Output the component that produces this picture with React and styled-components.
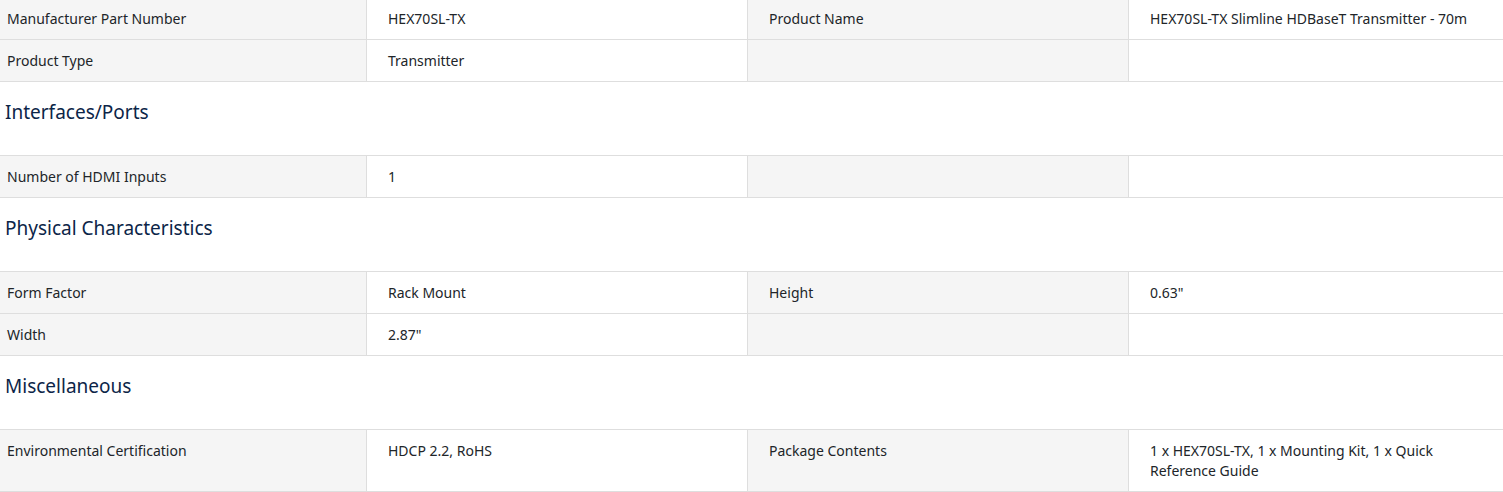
import React from "react";
import styled, { createGlobalStyle } from "styled-components";

const GlobalStyle = createGlobalStyle`
  body {
    margin: 0;
    background: #fff;
    font-family: "Noto Sans", "Open Sans", sans-serif;
    color: #212529;
  }
`;

const Specs = styled.div`
  margin-top: -2px;
  width: 1503px;
`;

const Row = styled.div`
  display: grid;
  grid-template-columns: 366px 381px 381px 375px;
  border-bottom: 1px solid #dedede;
`;

const Cell = styled.div`
  padding: 11px 20px 10px 21px;
  font-size: 14px;
  line-height: 20px;
  min-height: 20px;
  background: ${props => (props.$label ? "#f5f5f5" : "#fff")};
  border-left: 1px solid #dedede;
  &:first-child {
    border-left: none;
    padding-left: 7px;
  }
`;

const Heading = styled.h3`
  margin: 0;
  padding: 17px 5px 30px;
  font-size: 19px;
  line-height: 26px;
  font-weight: 400;
  color: #0c2548;
  border-bottom: 1px solid #dedede;
`;

const sections = [
  {
    rows: [
      ["Manufacturer Part Number", "HEX70SL-TX", "Product Name", "HEX70SL-TX Slimline HDBaseT Transmitter - 70m"],
      ["Product Type", "Transmitter", "", ""]
    ]
  },
  {
    title: "Interfaces/Ports",
    rows: [["Number of HDMI Inputs", "1", "", ""]]
  },
  {
    title: "Physical Characteristics",
    rows: [
      ["Form Factor", "Rack Mount", "Height", "0.63\""],
      ["Width", "2.87\"", "", ""]
    ]
  },
  {
    title: "Miscellaneous",
    rows: [
      ["Environmental Certification", "HDCP 2.2, RoHS", "Package Contents", "1 x HEX70SL-TX, 1 x Mounting Kit, 1 x Quick Reference Guide"]
    ]
  }
];

const App = () => (
  <>
    <GlobalStyle />
    <Specs>
      {sections.map((section, i) => (
        <React.Fragment key={i}>
          {section.title && <Heading>{section.title}</Heading>}
          {section.rows.map((row, j) => (
            <Row key={j}>
              {row.map((text, k) => (
                <Cell key={k} $label={k % 2 === 0}>
                  {text}
                </Cell>
              ))}
            </Row>
          ))}
        </React.Fragment>
      ))}
    </Specs>
  </>
);

export default App;
